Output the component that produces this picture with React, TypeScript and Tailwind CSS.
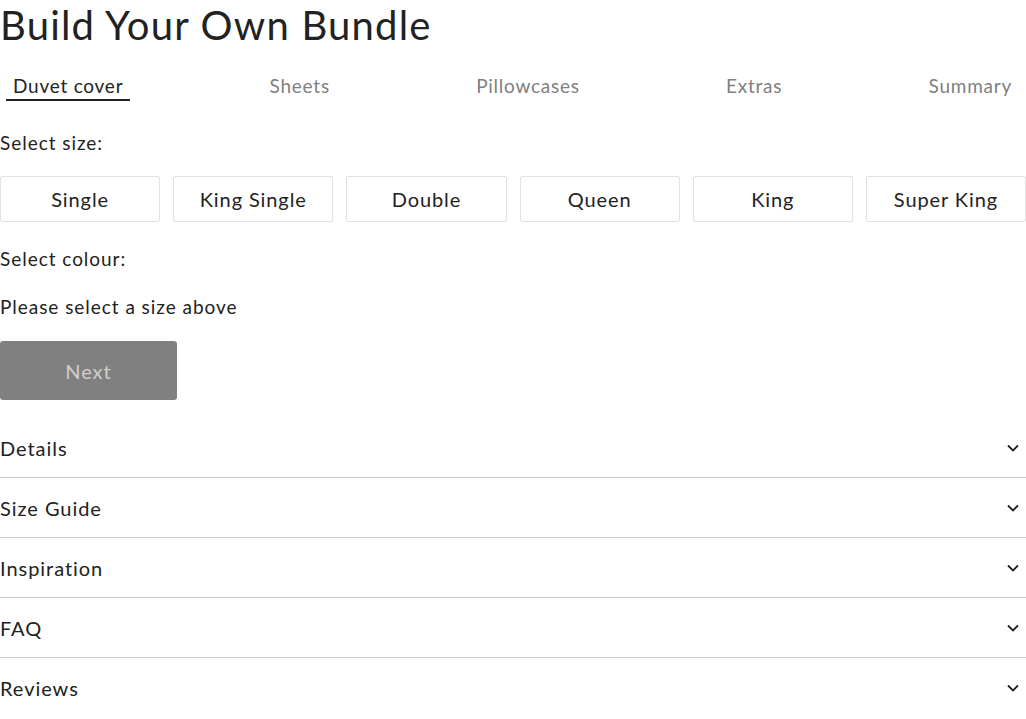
import { useState } from "react";

const tabs = ["Duvet cover", "Sheets", "Pillowcases", "Extras", "Summary"];
const sizes = ["Single", "King Single", "Double", "Queen", "King", "Super King"];
const sections = ["Details", "Size Guide", "Inspiration", "FAQ", "Reviews"];

function Chevron() {
  return (
    <svg width="12" height="8" viewBox="0 0 12 8" fill="none">
      <path d="M1 1.5 L6 6.5 L11 1.5" stroke="#222" strokeWidth="1.8" />
    </svg>
  );
}

export default function App() {
  const [activeTab, setActiveTab] = useState(0);
  const [size, setSize] = useState<string | null>(null);

  return (
    <div
      className="w-[1026px] bg-white text-[#222] tracking-[0.06em]"
      style={{ fontFamily: "Lato, 'Liberation Sans', sans-serif" }}
    >
      <h1 className="text-[40px] leading-[50px] font-normal tracking-[0.03em]">Build Your Own Bundle</h1>

      <div className="mt-[12px] flex justify-between pl-[6px] pr-[7px]">
        {tabs.map((t, i) => (
          <button
            key={t}
            onClick={() => setActiveTab(i)}
            className={
              i === activeTab
                ? "px-[7px] pt-[12px] pb-[1px] text-[19px] leading-[24px] tracking-[0.04em] text-[#222] border-b-2 border-[#222]"
                : "px-[7px] pt-[12px] pb-[1px] text-[19px] leading-[24px] tracking-[0.04em] text-[#808080] border-b-2 border-transparent"
            }
          >
            {t}
          </button>
        ))}
      </div>

      <p className="mt-[30px] text-[19px] leading-[24px]">Select size:</p>

      <div className="mt-[21px] grid grid-cols-6 gap-[13px]">
        {sizes.map((s) => (
          <button
            key={s}
            onClick={() => setSize(s)}
            className={
              size === s
                ? "h-[46px] rounded-[2px] border border-[#222] text-[20px] tracking-[0.045em]"
                : "h-[46px] rounded-[2px] border border-[#e1e1e1] text-[20px] tracking-[0.045em]"
            }
          >
            {s}
          </button>
        ))}
      </div>

      <p className="mt-[25px] text-[19px] leading-[24px]">Select colour:</p>
      <p className="mt-[24px] text-[19px] leading-[24px]">
        {size ? `Size: ${size}` : "Please select a size above"}
      </p>

      <button
        disabled={!size}
        className="mt-[22px] h-[59px] w-[177px] rounded-[3px] bg-[#808080] text-[20px] text-[#cfcfcf]"
      >
        Next
      </button>

      <div className="mt-[18px]">
        {sections.map((s, i) => (
          <div
            key={s}
            className={
              i === sections.length - 1
                ? "flex h-[60px] items-center justify-between pr-[7px] text-[20px]"
                : "flex h-[60px] items-center justify-between pr-[7px] text-[20px] border-b border-[#cccccc]"
            }
          >
            <span>{s}</span>
            <Chevron />
          </div>
        ))}
      </div>
    </div>
  );
}
